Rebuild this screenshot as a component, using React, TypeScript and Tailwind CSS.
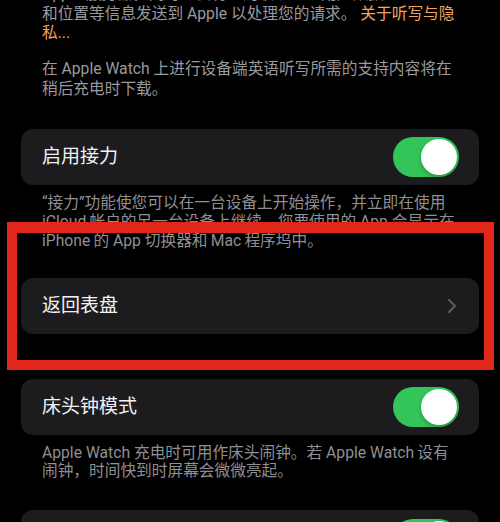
import React from "react";

const font = { fontFamily: '"Roboto", "Noto Sans CJK SC", sans-serif' };

function Toggle() {
    return (
        <div className="relative h-[40px] w-[66px] shrink-0 rounded-full bg-[#33c45a]">
            <div className="absolute right-[2px] top-[2px] h-[36px] w-[36px] rounded-full bg-white shadow-[0_2px_4px_rgba(0,0,0,0.25)]" />
        </div>
    );
}

function Card({ label, children }: { label: string; children?: React.ReactNode }) {
    return (
        <div className="mx-[21px] flex h-[56px] items-center justify-between rounded-[12px] bg-[#1c1c1e] pl-[21px] pr-[20px]">
            <span className="text-[19px] text-[#f2f2f4]">{label}</span>
            {children}
        </div>
    );
}

function Chevron() {
    return (
        <svg width="10" height="16" viewBox="0 0 10 16" fill="none" className="mr-[2px]">
            <path d="M2 2l6 6-6 6" stroke="#5c5c60" strokeWidth="2.2" strokeLinecap="round" strokeLinejoin="round" />
        </svg>
    );
}

export default function App() {
    return (
        <div className="relative h-[522px] w-[500px] overflow-hidden bg-black" style={font}>
            {/* dictation notes, scrolled partly off the top */}
            <div className="-mt-[16px] px-[42px] text-[15.7px] leading-[19.5px] text-[#9a9a9f]">
                <p className="whitespace-nowrap">
                    Apple 服务器。同时也会将您的联系人、用户数据
                    <br />
                    和位置等信息发送到 Apple 以处理您的请求。 <span className="text-[#f0a45e]">关于听写与隐</span>
                    <br />
                    <span className="text-[#f0a45e]">私...</span>
                </p>
                <p className="mt-[16.5px] whitespace-nowrap">
                    在 Apple Watch 上进行设备端英语听写所需的支持内容将在
                    <br />
                    稍后充电时下载。
                </p>
            </div>

            <div className="mt-[31px]">
                <Card label="启用接力">
                    <Toggle />
                </Card>
            </div>
            <p className="mt-[7.5px] whitespace-nowrap px-[42px] text-[15.7px] leading-[19px] text-[#8f8f94]">
                “接力”功能使您可以在一台设备上开始操作，并立即在使用
                <br />
                iCloud{"\u2009"}帐户的另一台设备上继续。您要使用的 App 会显示在
                <br />
                iPhone{"\u2009"}的 App 切换器和{"\u2009"}Mac{"\u2009"}程序坞中。
            </p>

            <div className="mt-[28.5px]">
                <Card label="返回表盘">
                    <Chevron />
                </Card>
            </div>

            <div className="mt-[45px]">
                <Card label="床头钟模式">
                    <Toggle />
                </Card>
            </div>
            <p className="mt-[8.5px] whitespace-nowrap px-[42px] text-[15.7px] leading-[18.5px] text-[#8f8f94]">
                Apple Watch 充电时可用作床头闹钟。若 Apple Watch{"\u2009"}设有
                <br />
                闹钟，时间快到时屏幕会微微亮起。
            </p>

            <div className="mt-[29px]">
                <Card label="">
                    <div className="self-start pt-[9px]">
                        <Toggle />
                    </div>
                </Card>
            </div>

            {/* red highlight annotation */}
            <div className="absolute left-[7px] top-[222px] h-[148px] w-[487px] border-[10px] border-t-[11px] border-[#e1261a]" />
        </div>
    );
}
